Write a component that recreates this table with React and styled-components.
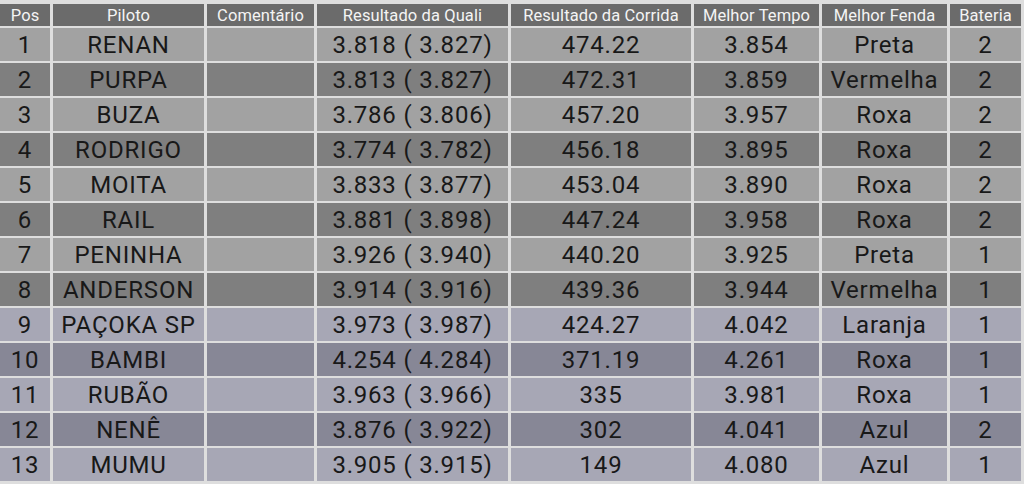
import React from 'react';
import styled, { createGlobalStyle } from 'styled-components';

const GlobalStyle = createGlobalStyle`
  html, body {
    margin: 0;
    padding: 0;
    background: #dedede;
    font-family: Roboto, "Liberation Sans", sans-serif;
  }
`;

const columns = ['Pos', 'Piloto', 'Comentário', 'Resultado da Quali', 'Resultado da Corrida', 'Melhor Tempo', 'Melhor Fenda', 'Bateria'];

const rows = [
  ['1', 'RENAN', '', '3.818 ( 3.827)', '474.22', '3.854', 'Preta', '2'],
  ['2', 'PURPA', '', '3.813 ( 3.827)', '472.31', '3.859', 'Vermelha', '2'],
  ['3', 'BUZA', '', '3.786 ( 3.806)', '457.20', '3.957', 'Roxa', '2'],
  ['4', 'RODRIGO', '', '3.774 ( 3.782)', '456.18', '3.895', 'Roxa', '2'],
  ['5', 'MOITA', '', '3.833 ( 3.877)', '453.04', '3.890', 'Roxa', '2'],
  ['6', 'RAIL', '', '3.881 ( 3.898)', '447.24', '3.958', 'Roxa', '2'],
  ['7', 'PENINHA', '', '3.926 ( 3.940)', '440.20', '3.925', 'Preta', '1'],
  ['8', 'ANDERSON', '', '3.914 ( 3.916)', '439.36', '3.944', 'Vermelha', '1'],
  ['9', 'PAÇOKA SP', '', '3.973 ( 3.987)', '424.27', '4.042', 'Laranja', '1'],
  ['10', 'BAMBI', '', '4.254 ( 4.284)', '371.19', '4.261', 'Roxa', '1'],
  ['11', 'RUBÃO', '', '3.963 ( 3.966)', '335', '3.981', 'Roxa', '1'],
  ['12', 'NENÊ', '', '3.876 ( 3.922)', '302', '4.041', 'Azul', '2'],
  ['13', 'MUMU', '', '3.905 ( 3.915)', '149', '4.080', 'Azul', '1'],
];

const tones = {
  grayLight: '#a2a2a2',
  grayDark: '#7f7f7f',
  blueLight: '#a7a7b5',
  blueDark: '#878796',
};

export default function App() {
  return (
    <>
      <GlobalStyle />
      <Grid>
        {columns.map(c => (
          <HeadCell key={c}>{c}</HeadCell>
        ))}
        {rows.map((r, i) => {
          const blue = i >= 8;
          const dark = i % 2 === 1;
          const tone = blue ? (dark ? 'blueDark' : 'blueLight') : (dark ? 'grayDark' : 'grayLight');
          return r.map((v, j) => (
            <Cell key={i + '-' + j} $tone={tone}>{v}</Cell>
          ));
        })}
      </Grid>
    </>
  );
}

const Grid = styled.div`
  display: grid;
  grid-template-columns: 50px 151px 107px 191px 180px 125px 125px 71px;
  grid-template-rows: 22px repeat(13, 33px);
  column-gap: 3px;
  row-gap: 2px;
  padding-top: 4px;
  width: 1021px;
`;

const HeadCell = styled.div`
  background: #6b6b6b;
  color: #f4f4f4;
  font-size: 16.5px;
  letter-spacing: 0.1px;
  display: flex;
  align-items: center;
  justify-content: center;
  white-space: nowrap;
`;

const Cell = styled.div`
  background: ${p => tones[p.$tone]};
  color: #181818;
  font-size: 24px;
  letter-spacing: 0.8px;
  display: flex;
  align-items: center;
  justify-content: center;
  white-space: nowrap;
`;
